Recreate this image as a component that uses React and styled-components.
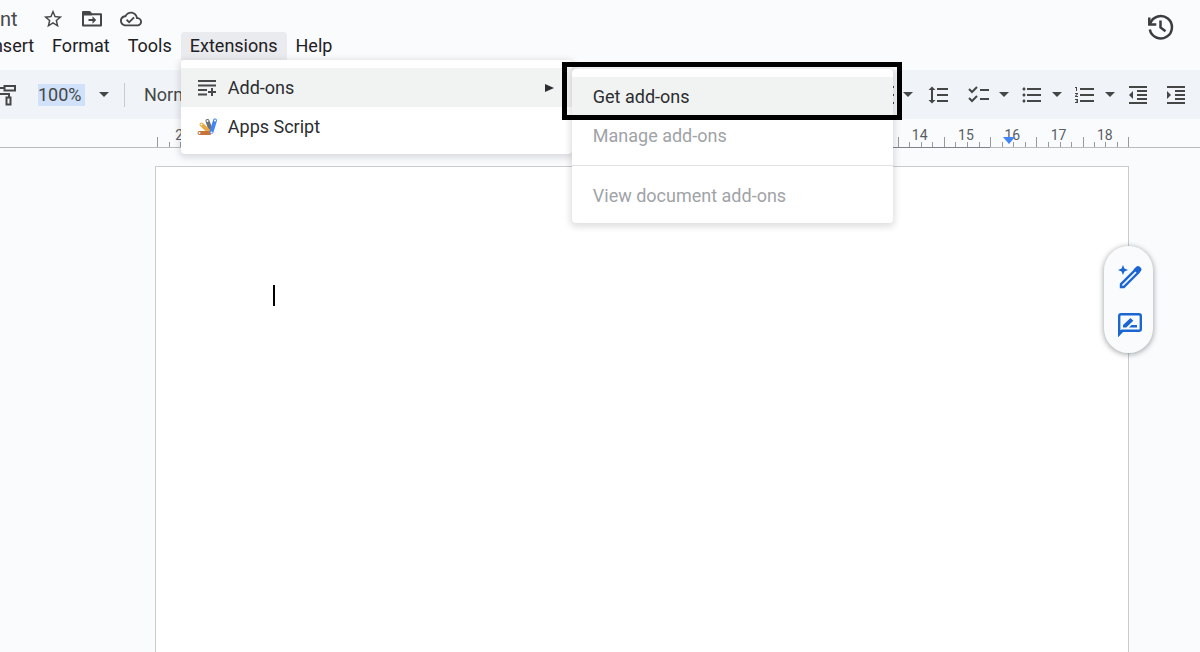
import styled, { createGlobalStyle } from "styled-components";

const GlobalStyle = createGlobalStyle`
  *, *::before, *::after {
    box-sizing: border-box;
  }

  body {
    margin: 0;
    overflow: hidden;
    background: #f9fbfd;
    color: #1f2023;
    font-family: Roboto, "Liberation Sans", sans-serif;
    font-size: 18px;
  }

  button, input, select {
    margin: 0;
    padding: 0;
    border: 0;
    background: none;
    color: inherit;
    font: inherit;
  }
`;

const AppShell = styled.div`
  display: flex;
  flex-direction: column;
  min-height: 100vh;
`;

const Header = styled.header`
  display: flex;
  justify-content: space-between;
  height: 70px;
`;

const TitleRow = styled.div`
  display: flex;
  align-items: center;
  gap: 16px;
  height: 32px;
  padding-top: 5px;
`;

const DocTitle = styled.h1`
  width: 25px;
  margin: 0;
  color: #47494d;
  font-size: 20px;
  font-weight: 400;
  line-height: 28px;
`;

const IconButton = styled.button`
  display: flex;
  align-items: center;
  justify-content: center;
  width: ${(props) => props.$size || 24}px;
  height: ${(props) => props.$size || 24}px;
  color: #444746;
`;

const TitleIcons = styled.div`
  display: flex;
  gap: 15px;
`;

const HistoryWrap = styled.div`
  padding: 12px 24px;
`;

const MenuBar = styled.nav`
  display: flex;
  margin-left: -21px;
`;

const MenuItem = styled.div`
  position: relative;
`;

const MenuButton = styled.button`
  height: 28px;
  padding: 0 9px;
  border-radius: 4px 4px 0 0;
  background: ${(props) => (props.$open ? "#e9ebee" : "none")};
  line-height: 26px;
`;

const Menu = styled.div`
  position: absolute;
  z-index: 2;
  top: ${(props) => (props.$sub ? 9 : 28)}px;
  left: ${(props) => (props.$sub ? "100%" : 0)};
  width: ${(props) => (props.$sub ? 321 : 391)}px;
  padding: 8px 0;
  border-radius: 4px;
  background: #fff;
  box-shadow: 0 2px 6px 2px rgba(60, 64, 67, 0.16);
`;

const MenuRow = styled.button`
  display: flex;
  align-items: center;
  gap: 10px;
  width: 100%;
  height: 39px;
  padding: 0 18px 0 ${(props) => (props.$plain ? 21 : 15)}px;
  background: ${(props) => (props.$active ? "#f1f3f2" : "none")};
  color: ${(props) => (props.disabled ? "#a0a3a7" : "#2b2d31")};
  text-align: left;
`;

const Arrow = styled.svg`
  margin-left: auto;
`;

const Divider = styled.hr`
  height: 1px;
  margin: 10px 0;
  border: 0;
  background: #dfe1e4;
`;

const Highlight = styled.div`
  position: absolute;
  z-index: 3;
  top: -7px;
  left: -10px;
  right: -9px;
  height: 58px;
  border: 5px solid #000;
  pointer-events: none;
`;

const Toolbar = styled.div`
  display: flex;
  align-items: center;
  justify-content: space-between;
  height: 49px;
  padding-right: 12px;
  background: #f0f3f8;
  color: #444746;
`;

const ToolGroup = styled.div`
  display: flex;
  align-items: center;
`;

const RollerButton = styled(IconButton)`
  margin-left: -6px;
`;

const ZoomInput = styled.input`
  width: 47px;
  height: 22px;
  margin-left: 20px;
  background: #d0e1f9;
`;

const CaretButton = styled.button`
  display: flex;
  justify-content: center;
  width: 10px;
  margin-left: ${(props) => props.$gap || 0}px;
`;

const Separator = styled.span`
  width: 1px;
  height: 24px;
  margin: 0 19px 0 15px;
  background: #c9cccf;
`;

const StyleSelect = styled.select`
  width: 130px;
  appearance: none;
`;

const Tool = styled.div`
  display: flex;
  align-items: center;
  gap: 8px;
  margin-left: ${(props) => props.$gap || 14}px;
`;

const Ruler = styled.div`
  display: grid;
  grid-template-columns: repeat(21, 1fr);
  height: 29px;
  padding: 0 71px 0 157px;
  border-bottom: 1px solid #b9bbbe;
`;

const Unit = styled.div`
  position: relative;
  padding: 8px 2px 0 0;
  color: #5a5e63;
  font-size: 14px;
  line-height: 16px;
  text-align: center;
  box-shadow: 0 1px 0 ${(props) => (props.$inside ? "#808387" : "transparent")};
`;

const Ticks = styled.div`
  position: absolute;
  inset: auto 0 0;
  display: flex;
  align-items: flex-end;
`;

const Tick = styled.i`
  flex: 1;
  height: 5px;
  border-left: 1px solid #96999d;

  &:first-child {
    height: 10px;
  }
`;

const EndTick = styled.i`
  height: 10px;
  border-left: 1px solid #96999d;
`;

const Marker = styled.svg`
  position: absolute;
  z-index: 1;
  left: 13px;
  bottom: 3px;
`;

const Workspace = styled.main`
  display: flex;
  flex: 1;
  padding: 18px 71px 0 155px;
`;

const Page = styled.article`
  position: relative;
  flex: 1;
  padding: 118px 117px 0;
  border: 1px solid #c9cbce;
  border-bottom: 0;
  background: #fff;
`;

const TextCaret = styled.div`
  width: 2px;
  height: 21px;
  background: #000;
`;

const SidePill = styled.aside`
  position: absolute;
  top: 79px;
  right: -25px;
  display: flex;
  flex-direction: column;
  align-items: center;
  gap: 20px;
  width: 49px;
  padding: 17px 0 14px 3px;
  border-radius: 25px;
  background: #f9fbfd;
  box-shadow: 0 1px 5px 1px rgba(60, 64, 67, 0.4);
`;

const Icon = ({ d, size = 24, children }) => (
  <svg width={size} height={size} viewBox="0 0 24 24" fill="currentColor" aria-hidden="true">
    {d && <path d={d} />}
    {children}
  </svg>
);

const paths = {
  star: "M22 9.24l-7.19-.62L12 2 9.19 8.63 2 9.24l5.46 4.73L5.82 21 12 17.27 18.18 21l-1.63-7.03L22 9.24zM12 15.4l-3.76 2.27 1-4.28-3.32-2.88 4.38-.38L12 6.1l1.71 4.04 4.38.38-3.32 2.88 1 4.28L12 15.4z",
  cloud:
    "M19.35 10.04C18.67 6.59 15.64 4 12 4 9.11 4 6.6 5.64 5.35 8.04 2.34 8.36 0 10.91 0 14c0 3.31 2.69 6 6 6h13c2.76 0 5-2.24 5-5 0-2.64-2.05-4.78-4.65-4.96zM19 18H6c-2.21 0-4-1.79-4-4 0-2.05 1.53-3.76 3.56-3.97l1.07-.11.5-.95C8.08 7.14 9.94 6 12 6c2.62 0 4.88 1.86 5.39 4.43l.3 1.5 1.53.11c1.56.1 2.78 1.41 2.78 2.96 0 1.65-1.35 3-3 3zm-9-3.82l-2.09-2.09L6.5 13.5 10 17l6.01-6.01-1.41-1.41z",
  lineSpacing: "M6 7h2.5L5 3.5 1.5 7H4v10H1.5L5 20.5 8.5 17H6V7zm4-2v2h11V5H10zm0 14h11v-2H10v2zm0-6h11v-2H10v2z",
  bullets:
    "M4 10.5c-.83 0-1.5.67-1.5 1.5s.67 1.5 1.5 1.5 1.5-.67 1.5-1.5-.67-1.5-1.5-1.5zm0-6c-.83 0-1.5.67-1.5 1.5S3.17 7.5 4 7.5 5.5 6.83 5.5 6 4.83 4.5 4 4.5zm0 12c-.83 0-1.5.68-1.5 1.5s.68 1.5 1.5 1.5 1.5-.68 1.5-1.5-.67-1.5-1.5-1.5zM7 19h14v-2H7v2zm0-6h14v-2H7v2zm0-8v2h14V5H7z",
  numbers: "M2 17h2v.5H3v1h1v.5H2v1h3v-4H2v1zm1-9h1V4H2v1h1v3zm-1 3h1.8L2 13.1v.9h3v-1H3.2L5 10.9V10H2v1zm5-6v2h14V5H7zm0 14h14v-2H7v2zm0-6h14v-2H7v2z",
  outdent: "M11 17h10v-2H11v2zm-8-5l4 4V8l-4 4zm0 9h18v-2H3v2zM3 3v2h18V3H3zm8 6h10V7H11v2zm0 4h10v-2H11v2z",
  indent: "M3 21h18v-2H3v2zM3 8v8l4-4-4-4zm8 9h10v-2H11v2zM3 3v2h18V3H3zm8 6h10V7H11v2zm0 4h10v-2H11v2z",
};

const Caret = () => (
  <svg width="10" height="5" viewBox="0 0 10 5" aria-hidden="true">
    <path d="M0 0h10L5 5z" fill="#444746" />
  </svg>
);

const FolderIcon = () => (
  <Icon>
    <path d="M3 5v13.500h18V7.200h-9.500L9.500 5z" fill="none" stroke="currentColor" strokeWidth="2" strokeLinejoin="round" />
    <path d="M3 5h6l3 3.500H3zM12.500 9.300l3.700 3.700-3.700 3.700v-2.700H8.500v-2h4z" />
  </Icon>
);

const HistoryIcon = () => (
  <svg width="30" height="30" viewBox="0 0 30 30" fill="none" stroke="#3a3c3f" strokeWidth="2.500" aria-hidden="true">
    <path d="M4.200 11.500A11.200 11.200 0 1 1 3.800 17.500" />
    <path d="M3.300 5.500v7h7" />
    <path d="M14.500 8.500v7l5 3.800" />
  </svg>
);

const RollerIcon = () => (
  <Icon>
    <path
      d="M10.500 3h10.500v4.500H10.500zM10.500 5H3v6h12v3.500M12.500 14.500h4v7h-4z"
      fill="none"
      stroke="currentColor"
      strokeWidth="2"
    />
  </Icon>
);

const ChecklistIcon = () => (
  <Icon>
    <path d="M2 6l3 3 5-5M2 15l3 3 5-5M13 7h9M13 16h9" fill="none" stroke="currentColor" strokeWidth="2" />
  </Icon>
);

const AddonsIcon = () => (
  <svg width="22" height="22" viewBox="0 0 22 22" aria-hidden="true">
    <path d="M2 4h18M2 8.500h18M2 13h9M2 17.500h9M16 11v8M12 15h8" fill="none" stroke="#47494d" strokeWidth="2" />
  </svg>
);

const AppsScriptIcon = () => (
  <svg width="22" height="22" viewBox="0 0 22 22" aria-hidden="true">
    <g fill="none" strokeLinecap="round" strokeWidth="4">
      <path d="M11.500 5l3.500 10" stroke="#6b7076" />
      <path d="M5.500 8.500l8.500 8" stroke="#eaa83e" />
      <path d="M3.500 17h10" stroke="#c8733a" />
      <path d="M19 4.500L15.500 16" stroke="#4285f4" />
    </g>
    <g fill="#fff">
      <circle cx="11.500" cy="5" r="1" />
      <circle cx="5.500" cy="8.500" r="1" />
      <circle cx="19" cy="4.500" r="1" />
      <circle cx="3.500" cy="17" r="1" />
      <circle cx="15.500" cy="16.500" r="1" />
    </g>
  </svg>
);

const PencilSparkIcon = () => (
  <svg width="26" height="26" viewBox="0 0 26 26" aria-hidden="true">
    <path d="M6 1l1.400 3.600L11 6 7.400 7.400 6 11 4.600 7.400 1 6l3.600-1.400z" fill="#1b66d2" />
    <path d="M4 20.200L18.500 5.700l2.800 2.800L6.800 23H4z" fill="none" stroke="#1b66d2" strokeWidth="2.400" />
    <path d="M16.500 5.500l3-3q1.500-1.200 3 0l1.500 1.500q1.200 1.500 0 3l-3 3z" fill="#1b66d2" />
  </svg>
);

const SuggestIcon = () => (
  <svg width="26" height="26" viewBox="0 0 26 26" aria-hidden="true">
    <path d="M2.200 22V4q0-1.800 1.800-1.800h18q1.800 0 1.800 1.800v13q0 1.800-1.800 1.800H5z" fill="none" stroke="#1b66d2" strokeWidth="2.400" />
    <path d="M1 25v-7h7z" fill="#1b66d2" />
    <path d="M6 13l7.500-7 2.800 2.800-7 6.700H6zM12 15.500l2.500-2.500H20v2.500z" fill="#1b66d2" />
  </svg>
);

// the stretch that lies under the open menus carries no labels
const units = [2, ...Array(15).fill(""), 14, 15, 16, 17, 18];

const ListTool = ({ label, gap, children }) => (
  <Tool $gap={gap}>
    <IconButton aria-label={label}>{children}</IconButton>
    <CaretButton aria-label={`${label} options`}>
      <Caret />
    </CaretButton>
  </Tool>
);

const ExtensionsMenu = () => (
  <Menu role="menu">
    <MenuRow role="menuitem" $active>
      <AddonsIcon />
      Add-ons
      <Arrow width="9" height="8" viewBox="0 0 9 8" aria-hidden="true">
        <path d="M0 0l9 4-9 4z" fill="#2b2d31" />
      </Arrow>
    </MenuRow>
    <MenuRow role="menuitem">
      <AppsScriptIcon />
      Apps Script
    </MenuRow>
    <Menu role="menu" $sub>
      <MenuRow role="menuitem" $plain $active>
        Get add-ons
      </MenuRow>
      <MenuRow role="menuitem" $plain disabled>
        Manage add-ons
      </MenuRow>
      <Divider />
      <MenuRow role="menuitem" $plain disabled>
        View document add-ons
      </MenuRow>
      <Highlight />
    </Menu>
  </Menu>
);

export default function App() {
  return (
    <>
      <GlobalStyle />
      <AppShell>
        <Header>
          <div>
            <TitleRow>
              <DocTitle>nt</DocTitle>
              <TitleIcons>
                <IconButton aria-label="Star"><Icon d={paths.star} size={22} /></IconButton>
                <IconButton aria-label="Move"><FolderIcon /></IconButton>
                <IconButton aria-label="Document status"><Icon d={paths.cloud} size={22} /></IconButton>
              </TitleIcons>
            </TitleRow>
            <MenuBar>
              <MenuButton>Insert</MenuButton>
              <MenuButton>Format</MenuButton>
              <MenuButton>Tools</MenuButton>
              <MenuItem>
                <MenuButton $open aria-expanded="true">Extensions</MenuButton>
                <ExtensionsMenu />
              </MenuItem>
              <MenuButton>Help</MenuButton>
            </MenuBar>
          </div>
          <HistoryWrap>
            <IconButton $size={30} aria-label="Version history"><HistoryIcon /></IconButton>
          </HistoryWrap>
        </Header>

        <Toolbar>
          <ToolGroup>
            <RollerButton aria-label="Paint format"><RollerIcon /></RollerButton>
            <ZoomInput aria-label="Zoom" defaultValue="100%" />
            <CaretButton $gap={14} aria-label="Zoom options"><Caret /></CaretButton>
            <Separator />
            <StyleSelect aria-label="Styles" defaultValue="normal">
              <option value="normal">Normal text</option>
            </StyleSelect>
          </ToolGroup>
          <ToolGroup>
            <ListTool label="Align">
              <Icon d="M3 3h20v2H3zM3 11h20v2H3zM3 19h20v2H3z" />
            </ListTool>
            <Tool>
              <IconButton aria-label="Line spacing"><Icon d={paths.lineSpacing} /></IconButton>
            </Tool>
            <ListTool label="Checklist" gap={16}><ChecklistIcon /></ListTool>
            <ListTool label="Bulleted list" gap={11}><Icon d={paths.bullets} /></ListTool>
            <ListTool label="Numbered list" gap={11}><Icon d={paths.numbers} /></ListTool>
            <Tool $gap={11}>
              <IconButton aria-label="Decrease indent"><Icon d={paths.outdent} /></IconButton>
            </Tool>
            <Tool>
              <IconButton aria-label="Increase indent"><Icon d={paths.indent} /></IconButton>
            </Tool>
          </ToolGroup>
        </Toolbar>

        <Ruler>
          {units.map((unit, i) => (
            <Unit key={i} $inside={i > 2 && i < 18}>
              {unit}
              <Ticks>
                <Tick />
                <Tick />
                <Tick />
                <Tick />
                {i === units.length - 1 && <EndTick />}
              </Ticks>
              {unit === 16 && (
                <Marker width="12" height="7" viewBox="0 0 12 7" aria-hidden="true">
                  <path d="M0 0h12L6 7z" fill="#4285f4" />
                </Marker>
              )}
            </Unit>
          ))}
        </Ruler>

        <Workspace>
          <Page>
            <TextCaret />
            <SidePill>
              <IconButton $size={28} aria-label="Help me write"><PencilSparkIcon /></IconButton>
              <IconButton $size={28} aria-label="Suggest edits"><SuggestIcon /></IconButton>
            </SidePill>
          </Page>
        </Workspace>
      </AppShell>
    </>
  );
}
